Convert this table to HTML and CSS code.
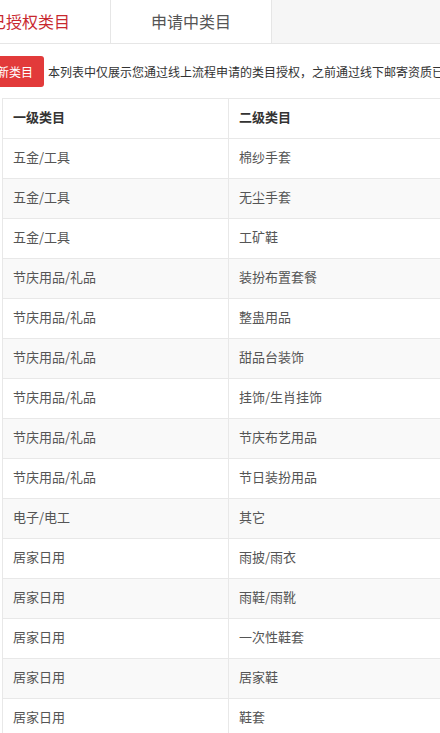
FILE: index.html
```html
<!DOCTYPE html>
<html lang="zh-CN">
<head>
<meta charset="utf-8">
<title>类目授权</title>
<link rel="stylesheet" href="styles.css">
</head>
<body>
<div class="page">
  <div class="tabs">
    <div class="tab active">已授权类目</div>
    <div class="tab">申请中类目</div>
    <div class="tab-rest"></div>
  </div>
  <div class="toolbar">
    <button class="btn-add">申请新类目</button>
    <span class="tip">本列表中仅展示您通过线上流程申请的类目授权，之前通过线下邮寄资质已授权的类目不在此列表中展示</span>
  </div>
  <div class="table-wrap">
    <table class="cat-table">
      <thead>
        <tr><th class="c1">一级类目</th><th>二级类目</th></tr>
      </thead>
      <tbody>
        <tr><td>五金/工具</td><td>棉纱手套</td></tr>
        <tr><td>五金/工具</td><td>无尘手套</td></tr>
        <tr><td>五金/工具</td><td>工矿鞋</td></tr>
        <tr><td>节庆用品/礼品</td><td>装扮布置套餐</td></tr>
        <tr><td>节庆用品/礼品</td><td>整蛊用品</td></tr>
        <tr><td>节庆用品/礼品</td><td>甜品台装饰</td></tr>
        <tr><td>节庆用品/礼品</td><td>挂饰/生肖挂饰</td></tr>
        <tr><td>节庆用品/礼品</td><td>节庆布艺用品</td></tr>
        <tr><td>节庆用品/礼品</td><td>节日装扮用品</td></tr>
        <tr><td>电子/电工</td><td>其它</td></tr>
        <tr><td>居家日用</td><td>雨披/雨衣</td></tr>
        <tr><td>居家日用</td><td>雨鞋/雨靴</td></tr>
        <tr><td>居家日用</td><td>一次性鞋套</td></tr>
        <tr><td>居家日用</td><td>居家鞋</td></tr>
        <tr><td>居家日用</td><td>鞋套</td></tr>
      </tbody>
    </table>
  </div>
</div>
</body>
</html>
```
FILE: styles.css
```css
html, body {
  margin: 0;
  padding: 0;
  background: #fff;
  overflow: hidden;
}
body {
  font-family: "Noto Sans CJK SC", "Noto Sans", "Liberation Sans", sans-serif;
  color: #333;
}
.page {
  margin-left: -50px;
  width: 900px;
}
.tabs {
  display: flex;
  height: 43px;
  border-bottom: 1px solid #e6e6e6;
  background: #f6f6f6;
}
.tab {
  width: 160px;
  border-right: 1px solid #e6e6e6;
  background: #fff;
  text-align: center;
  font-size: 16px;
  line-height: 42px;
  color: #555;
}
.tab.active {
  color: #c8282e;
}
.tab-rest {
  flex: 1;
}
.toolbar {
  display: flex;
  align-items: center;
  padding: 12px 0 11px 12px;
  white-space: nowrap;
}
.btn-add {
  height: 31px;
  padding: 0 11px;
  border: none;
  border-radius: 3px;
  background: #e23a3a;
  color: #fff;
  font-family: inherit;
  font-size: 12px;
  line-height: 31px;
}
.tip {
  margin-left: 4px;
  font-size: 12px;
  color: #333;
}
.table-wrap {
  margin-left: 52px;
}
.cat-table {
  width: 760px;
  border-collapse: collapse;
  font-size: 13px;
}
.cat-table th,
.cat-table td {
  border: 1px solid #e8e8e8;
  padding: 8px 10px 11px;
  line-height: 20px;
  text-align: left;
  white-space: nowrap;
}
.cat-table th {
  font-weight: bold;
  color: #333;
}
.cat-table .c1 {
  width: 205px;
}
.cat-table td {
  color: #555;
}
.cat-table tbody tr:nth-child(even) td {
  background: #f9f9f9;
}
```
